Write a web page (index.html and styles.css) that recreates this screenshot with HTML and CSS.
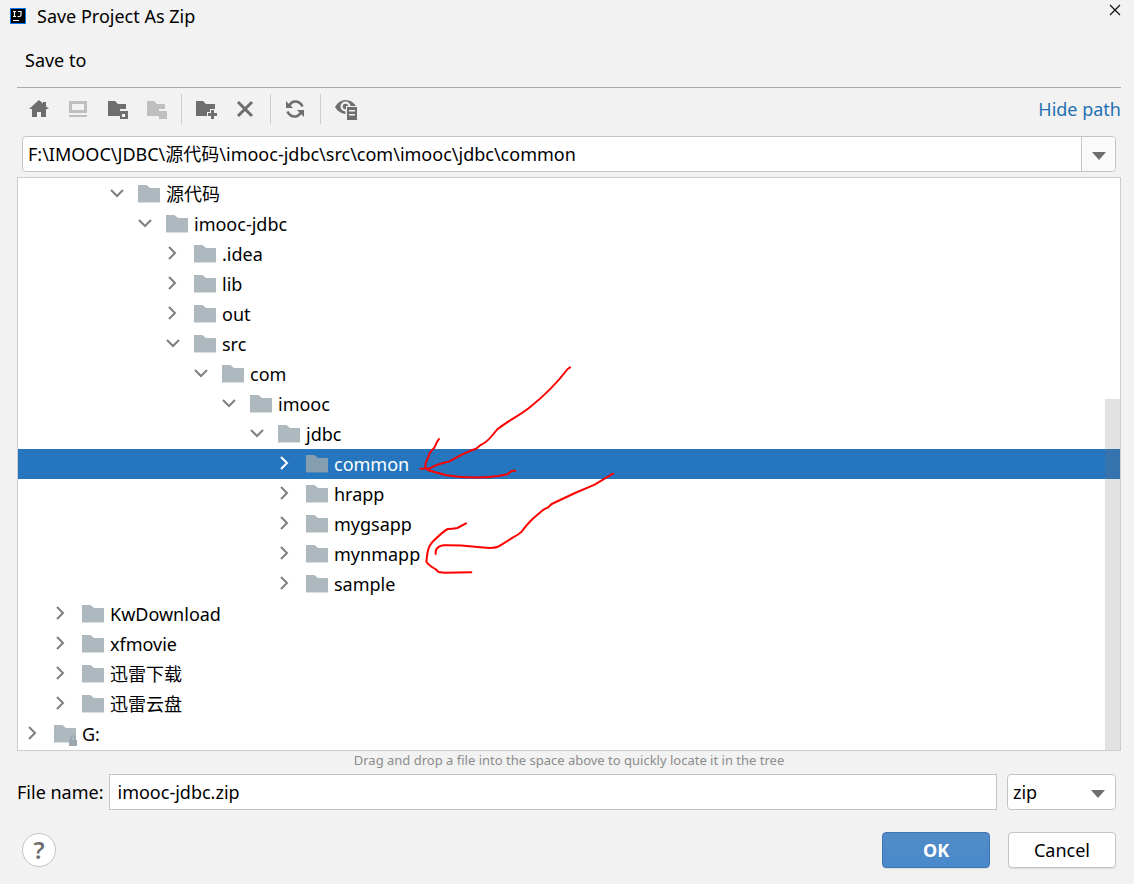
FILE: index.html
```html
<!DOCTYPE html>
<html lang="en">
<head>
<meta charset="utf-8">
<title>Save Project As Zip</title>
<link rel="stylesheet" href="styles.css">
</head>
<body>
<svg class="symbols" aria-hidden="true">
  <symbol id="folder" viewBox="0 0 22 18"><path d="M0 0h8.500l3.500 3h10v14H0z"/><path d="M0 17h22v1H0z" opacity=".45"/></symbol>
  <symbol id="chevron" viewBox="0 0 14 14"><path d="M4 1l6 6-6 6" fill="none" stroke="currentColor" stroke-width="2"/></symbol>
  <symbol id="caret" viewBox="0 0 14 8"><path d="M0 0h14L7 8z"/></symbol>
</svg>
<main class="dialog">
  <header class="titlebar">
    <svg class="app-icon" viewBox="0 0 16 16" aria-hidden="true"><path d="M0 0h16v16H0z" fill="#087cfa"/><path d="M1 1h14v14H1z" fill="#000"/><path d="M3 3.500h3M4.500 3.500v5M3 8.500h3M8 3.500h3v3.500q0 1.500-1.500 1.500H7.500M3 12.500h6" fill="none" stroke="#fff" stroke-width="1.200"/></svg>
    <h1 class="title">Save Project As Zip</h1>
    <button class="close" type="button" aria-label="Close"><svg viewBox="0 0 10 10"><path d="M0 0l10 10M10 0L0 10" fill="none" stroke="#111" stroke-width="1.200"/></svg></button>
  </header>
  <p class="subtitle">Save to</p>
  <div class="toolbar">
    <button class="tool" type="button" aria-label="Home"><svg viewBox="0 0 22 20"><path d="M11 1L1 10h3v8h5v-5h4v5h5v-8h3l-3-2.700V3h-3v1.600z"/></svg></button>
    <button class="tool" type="button" aria-label="Desktop" disabled><svg viewBox="0 0 22 20"><path d="M2 2h18v12H2zM5 5v6h12V5zM2 16h18v2H2z" fill-rule="evenodd"/></svg></button>
    <button class="tool" type="button" aria-label="Project folder"><svg viewBox="0 0 22 20"><path d="M2 2h7l3 3h8v5h-6v7H2z"/><path d="M14 12h8v8h-8zM16 15v3h3v-3z" fill-rule="evenodd"/></svg></button>
    <button class="tool" type="button" aria-label="Module folder" disabled><svg viewBox="0 0 22 20"><path d="M2 2h7l3 3h8v5h-6v7H2z"/><path d="M14 12h8v8h-8z"/></svg></button>
    <span class="separator"></span>
    <button class="tool" type="button" aria-label="New folder"><svg viewBox="0 0 22 20"><path d="M1 2h7l3 3h9v5h-5v3h-3v4H1z"/><path d="M16 11h3v3h3v3h-3v3h-3v-3h-3v-3h3z"/></svg></button>
    <button class="tool" type="button" aria-label="Delete"><svg viewBox="0 0 22 20"><path d="M4 3l14 14M18 3L4 17" fill="none" stroke="currentColor" stroke-width="3"/></svg></button>
    <span class="separator"></span>
    <button class="tool" type="button" aria-label="Refresh"><svg viewBox="0 0 22 20"><path d="M5 7Q7.500 2 12 2.500q4.500 .5 6.500 5M17 13q-2.500 5-7 4.500-4.500-.5-6.500-5" fill="none" stroke="currentColor" stroke-width="2.600"/><path d="M2 2v7h7zM20 18v-7h-7z"/></svg></button>
    <span class="separator"></span>
    <button class="tool wide" type="button" aria-label="Show hidden files"><svg viewBox="0 0 24 24"><path d="M1 10Q5 3 11.500 3T22 9H11.500v8Q4.500 16 1 10z"/><circle cx="11.500" cy="9.500" r="5" fill="#f2f2f2"/><circle cx="11.500" cy="9.500" r="2.800"/><path d="M12 9h11v15H12z" fill="#f2f2f2"/><path d="M13 10h10v13H13zM15 13v1.500h6V13zM15 17v1.500h6V17z" fill-rule="evenodd"/></svg></button>
    <a class="hide-path" href="#path">Hide path</a>
  </div>
  <div class="combo">
    <input id="path" class="combo-input" type="text" aria-label="Path" value="F:\IMOOC\JDBC\源代码\imooc-jdbc\src\com\imooc\jdbc\common">
    <button class="combo-button" type="button" aria-label="Recent paths"><svg><use href="#caret"/></svg></button>
  </div>
  <div class="tree-box">
    <ul class="tree" role="tree">
      <li class="node open level-3" role="treeitem"><svg class="chevron"><use href="#chevron"/></svg><svg class="folder"><use href="#folder"/></svg>源代码</li>
      <li class="node open level-4" role="treeitem"><svg class="chevron"><use href="#chevron"/></svg><svg class="folder"><use href="#folder"/></svg>imooc-jdbc</li>
      <li class="node level-5" role="treeitem"><svg class="chevron"><use href="#chevron"/></svg><svg class="folder"><use href="#folder"/></svg>.idea</li>
      <li class="node level-5" role="treeitem"><svg class="chevron"><use href="#chevron"/></svg><svg class="folder"><use href="#folder"/></svg>lib</li>
      <li class="node level-5" role="treeitem"><svg class="chevron"><use href="#chevron"/></svg><svg class="folder"><use href="#folder"/></svg>out</li>
      <li class="node open level-5" role="treeitem"><svg class="chevron"><use href="#chevron"/></svg><svg class="folder"><use href="#folder"/></svg>src</li>
      <li class="node open level-6" role="treeitem"><svg class="chevron"><use href="#chevron"/></svg><svg class="folder"><use href="#folder"/></svg>com</li>
      <li class="node open level-7" role="treeitem"><svg class="chevron"><use href="#chevron"/></svg><svg class="folder"><use href="#folder"/></svg>imooc</li>
      <li class="node open level-8" role="treeitem"><svg class="chevron"><use href="#chevron"/></svg><svg class="folder"><use href="#folder"/></svg>jdbc</li>
      <li class="node selected level-9" role="treeitem" aria-selected="true"><svg class="chevron"><use href="#chevron"/></svg><svg class="folder"><use href="#folder"/></svg>common</li>
      <li class="node level-9" role="treeitem"><svg class="chevron"><use href="#chevron"/></svg><svg class="folder"><use href="#folder"/></svg>hrapp</li>
      <li class="node level-9" role="treeitem"><svg class="chevron"><use href="#chevron"/></svg><svg class="folder"><use href="#folder"/></svg>mygsapp</li>
      <li class="node level-9" role="treeitem"><svg class="chevron"><use href="#chevron"/></svg><svg class="folder"><use href="#folder"/></svg>mynmapp</li>
      <li class="node level-9" role="treeitem"><svg class="chevron"><use href="#chevron"/></svg><svg class="folder"><use href="#folder"/></svg>sample</li>
      <li class="node level-1" role="treeitem"><svg class="chevron"><use href="#chevron"/></svg><svg class="folder"><use href="#folder"/></svg>KwDownload</li>
      <li class="node level-1" role="treeitem"><svg class="chevron"><use href="#chevron"/></svg><svg class="folder"><use href="#folder"/></svg>xfmovie</li>
      <li class="node level-1" role="treeitem"><svg class="chevron"><use href="#chevron"/></svg><svg class="folder"><use href="#folder"/></svg>迅雷下载</li>
      <li class="node level-1" role="treeitem"><svg class="chevron"><use href="#chevron"/></svg><svg class="folder"><use href="#folder"/></svg>迅雷云盘</li>
      <li class="node" role="treeitem"><svg class="chevron"><use href="#chevron"/></svg><svg class="folder" viewBox="0 0 22 18"><use href="#folder" width="22" height="18"/><path d="M15 15h8v6h-8z" fill="#9aa7b0"/><path d="M17 15v-2q0-2 2-2t2 2v2" fill="none" stroke="#9aa7b0" stroke-width="1.500"/></svg>G:</li>
    </ul>
    <div class="scroll-thumb"></div>
    <svg class="ink" viewBox="0 0 720 720" aria-hidden="true">
      <path d="M510 52L503 57Q455 120 387 174C360 195 325 212 292 238C275 256 268 274 242 285L228 296Q212 300 180 317L148 334C125 341 110 341 90 355L61 356M117 267L112 274L103 293Q96 299 89 309Q85 324 80 331Q73 349 79 357Q82 361 89 362L140 376C190 384 250 384 295 378L322 373L336 362L346 362"/>
      <path d="M639 371L584 404L525 429L455 462L443 473L432 478Q410 496 397 508Q383 521 365 545Q356 554 338 563L300 587Q290 594 270 594C220 592 210 585 130 586Q105 590 107 612M198 520L172 534Q157 537 143 537Q132 542 98 575C80 596 83 610 79 635Q83 644 106 657L116 666L133 668L214 667"/>
    </svg>
  </div>
  <p class="hint">Drag and drop a file into the space above to quickly locate it in the tree</p>
  <div class="file-row">
    <label class="file-label" for="file-name">File name:</label>
    <input id="file-name" class="file-input" type="text" value="imooc-jdbc.zip">
    <div class="select-box">
      <select class="select" aria-label="File type"><option>zip</option></select>
      <svg class="select-caret" aria-hidden="true"><use href="#caret"/></svg>
    </div>
  </div>
  <footer class="actions">
    <button class="help" type="button" aria-label="Help">?</button>
    <button class="button primary" type="button">OK</button>
    <button class="button" type="button">Cancel</button>
  </footer>
</main>
</body>
</html>
```
FILE: styles.css
```css
* { box-sizing: border-box; }

body {
  margin: 0;
  background: #f2f2f2;
  color: #000;
  font: 18px/24px "Noto Sans", "Noto Sans CJK SC", sans-serif;
}

button, input, select { font: inherit; color: inherit; }
button { padding: 0; cursor: pointer; }
p, h1, ul { margin: 0; padding: 0; }

.symbols { position: absolute; width: 0; height: 0; }

.dialog {
  display: flex;
  flex-direction: column;
  min-height: 100vh;
  padding: 0 13px 16px 17px;
}

.titlebar { display: flex; align-items: center; height: 32px; margin-left: -7px; }
.app-icon { width: 16px; height: 16px; }
.title { flex: 1; margin-left: 11px; font-size: 18px; font-weight: 400; }
.close { display: flex; align-items: center; justify-content: center; width: 14px; height: 20px; margin: 0 -1px 12px 0; border: 0; background: none; }
.close svg { width: 10px; height: 10px; overflow: visible; }

.subtitle { padding: 16px 8px 15px; }

.toolbar {
  display: flex;
  align-items: center;
  height: 49px;
  padding: 0 0 6px 11px;
  border-top: 1px solid #acacac;
}
.tool { display: flex; width: 22px; height: 20px; margin-right: 17px; border: 0; background: none; color: #6e6e6e; }
.tool:disabled { color: #bfbfbf; }
.tool svg { width: 100%; height: 100%; fill: currentColor; }
.tool.wide { width: 24px; height: 24px; }
.separator { width: 1px; height: 30px; margin: 0 13px 0 -3px; background: #cdcdcd; }
.hide-path { margin-left: auto; color: #2470b3; text-decoration: none; }

.combo { display: flex; height: 36px; margin: 0 5px; border: 1px solid #c4c4c4; border-radius: 4px; background: #fff; overflow: hidden; }
.combo-input { flex: 1; min-width: 0; padding: 0 5px; border: 0; background: none; outline: 0; }
.combo-button { display: flex; align-items: center; justify-content: center; width: 34px; padding-top: 3px; border: 0; border-left: 1px solid #c4c4c4; background: #fafafa; }
.combo-button svg, .select-caret { width: 14px; height: 8px; fill: #6e6e6e; }

.tree-box { position: relative; margin-top: 5px; padding: 1px 0; border: 1px solid #cdcdcd; background: #fff; }
.tree { list-style: none; }
.node { display: flex; align-items: center; height: 30px; padding-left: 7px; color: #000; }
.level-1 { padding-left: 35px; }
.level-3 { padding-left: 91px; }
.level-4 { padding-left: 119px; }
.level-5 { padding-left: 147px; }
.level-6 { padding-left: 175px; }
.level-7 { padding-left: 203px; }
.level-8 { padding-left: 231px; }
.level-9 { padding-left: 259px; }
.chevron { width: 14px; height: 14px; margin: 0 15px 2px 0; color: #7f7f7f; }
.open .chevron { margin: 0 14px 2px 1px; transform: rotate(90deg); }
.folder { width: 22px; height: 18px; margin: 0 6px 1px 0; fill: #adb8bf; overflow: visible; }
.selected { background: #2675bf; color: #fff; }
.selected .chevron { color: #fff; }
.selected .folder { fill: #849db1; }

.scroll-thumb { position: absolute; top: 221px; right: 0; bottom: 0; width: 15px; background: rgba(110, 110, 110, 0.2); }
.ink { position: absolute; top: 172px; left: 382px; width: 240px; height: 240px; fill: none; stroke: #f00; stroke-width: 6; stroke-linecap: round; stroke-linejoin: round; pointer-events: none; }

.hint { color: #8c8c8c; font-size: 13px; line-height: 18px; text-align: center; }

.file-row { display: flex; align-items: center; margin: 5px 5px 0 0; }
.file-label { margin-right: 5px; }
.file-input { flex: 1; min-width: 0; height: 36px; padding: 0 8px; border: 1px solid #c4c4c4; background: #fff; outline: 0; }
.select-box { position: relative; width: 109px; height: 36px; margin-left: 10px; }
.select { width: 100%; height: 100%; padding: 0 5px; border: 1px solid #c4c4c4; border-radius: 4px; background: #fff; appearance: none; }
.select-caret { position: absolute; top: 16px; right: 11px; pointer-events: none; }

.actions { display: flex; align-items: center; gap: 18px; margin: 22px 5px 0; }
.help { width: 34px; height: 34px; margin-right: auto; border: 1px solid #c4c4c4; border-radius: 50%; background: #fff; color: #6e6e6e; font-size: 24px; font-weight: 600; line-height: 30px; }
.button { width: 108px; height: 36px; border: 1px solid #c4c4c4; border-radius: 4px; background: #fff; box-shadow: 0 1px 1px #ddd; }
.primary { border-color: #3d75b3; background: linear-gradient(#528cc7, #4989cc); color: #fff; font-weight: 700; }
```
